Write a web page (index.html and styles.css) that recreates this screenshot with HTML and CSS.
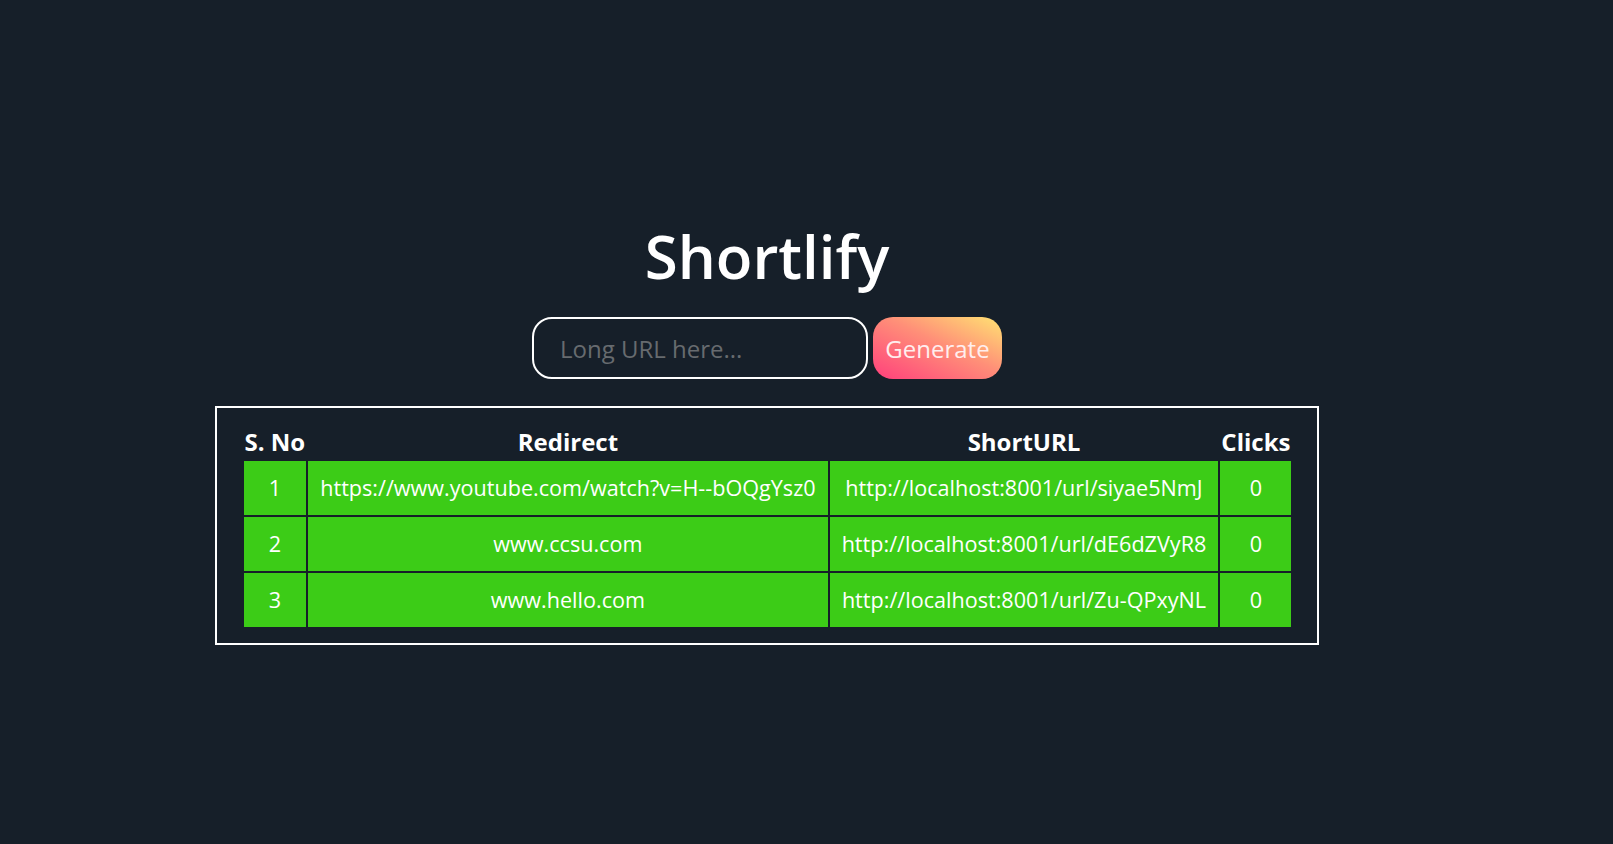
FILE: index.html
```html
<!DOCTYPE html>
<html lang="en">
<head>
<meta charset="utf-8">
<title>Shortlify</title>
<link rel="stylesheet" href="styles.css">
</head>
<body>
<main class="page">
  <h1 class="title">Shortlify</h1>
  <form class="shorten-form">
    <input class="url-input" type="text" placeholder="Long URL here...">
    <button class="generate-btn" type="button">Generate</button>
  </form>
  <section class="table-box">
    <table class="url-table">
      <thead>
        <tr>
          <th>S. No</th>
          <th>Redirect</th>
          <th>ShortURL</th>
          <th>Clicks</th>
        </tr>
      </thead>
      <tbody>
        <tr>
          <td>1</td>
          <td>https://www.youtube.com/watch?v=H--bOQgYsz0</td>
          <td>http://localhost:8001/url/siyae5NmJ</td>
          <td>0</td>
        </tr>
        <tr>
          <td>2</td>
          <td>www.ccsu.com</td>
          <td>http://localhost:8001/url/dE6dZVyR8</td>
          <td>0</td>
        </tr>
        <tr>
          <td>3</td>
          <td>www.hello.com</td>
          <td>http://localhost:8001/url/Zu-QPxyNL</td>
          <td>0</td>
        </tr>
      </tbody>
    </table>
  </section>
</main>
</body>
</html>
```

FILE: styles.css
```css
html, body {
  margin: 0;
  padding: 0;
}

body {
  background: #161f29;
  color: #ffffff;
  font-family: "Open Sans", "Liberation Sans", sans-serif;
  min-height: 100vh;
}

.page {
  width: 1534px;
  padding-top: 215px;
  display: flex;
  flex-direction: column;
  align-items: center;
}

.title {
  margin: 0;
  font-size: 60px;
  font-weight: 600;
  line-height: normal;
  color: #ffffff;
}

.shorten-form {
  margin-top: 20px;
  display: flex;
  align-items: center;
  gap: 5px;
}

.url-input {
  box-sizing: border-box;
  width: 336px;
  height: 62px;
  border: 2px solid #ffffff;
  border-radius: 20px;
  background: #161f29;
  color: #ffffff;
  font-family: "Open Sans", "Liberation Sans", sans-serif;
  font-size: 24px;
  padding: 0 20px 0 26px;
  outline: none;
}

.url-input::placeholder {
  color: #676b6f;
}

.generate-btn {
  box-sizing: border-box;
  width: 129px;
  height: 62px;
  border: none;
  border-radius: 20px;
  background: linear-gradient(to top right, #ff3f7c 0%, #ff8f78 55%, #ffe372 100%);
  color: #ffeeee;
  font-family: "Open Sans", "Liberation Sans", sans-serif;
  font-size: 24px;
  padding: 0;
  cursor: pointer;
}

.table-box {
  margin-top: 27px;
  border: 2px solid #ffffff;
  padding: 14px 24px 14px 25px;
}

.url-table {
  border-spacing: 2px;
}

.url-table th {
  padding: 1px;
  font-size: 24px;
  font-weight: 700;
  line-height: normal;
  text-align: center;
  white-space: nowrap;
}

.url-table td {
  padding: 12px;
  font-size: 21.6px;
  line-height: 30px;
  background: #3ccc17;
  color: #ffffff;
  text-align: center;
  white-space: nowrap;
}
```
